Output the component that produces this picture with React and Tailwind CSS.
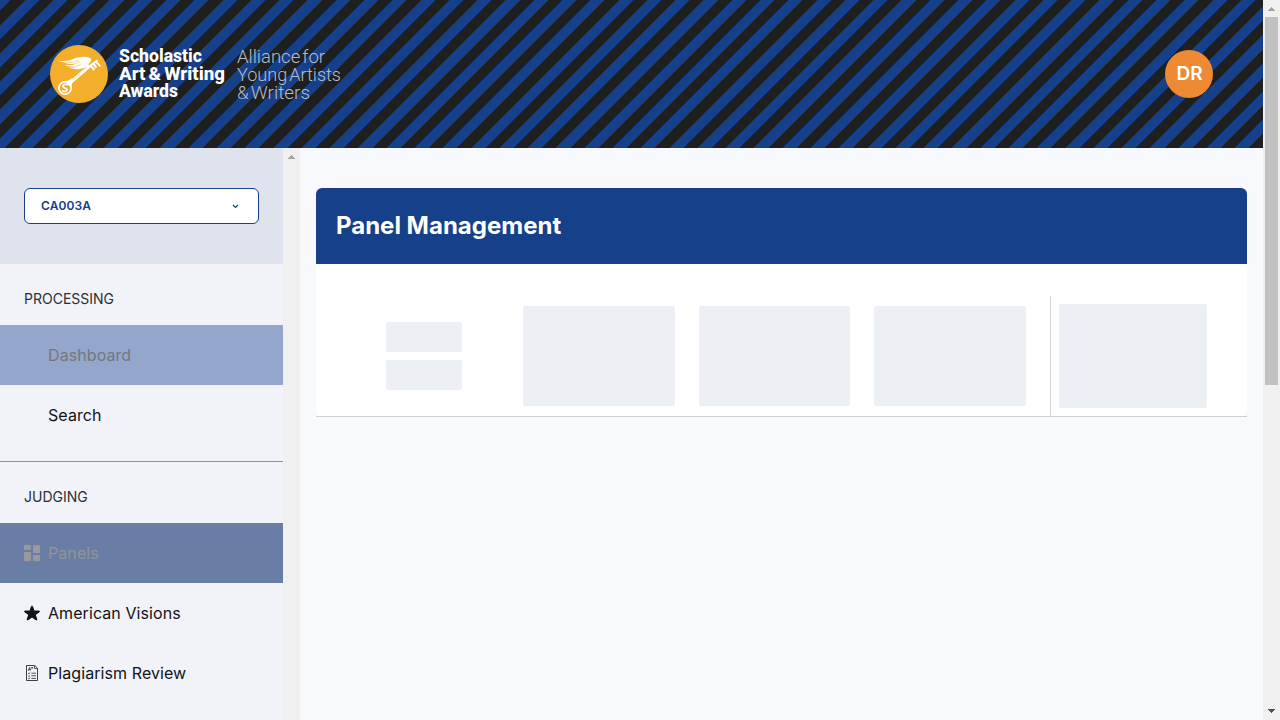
import { IoStar } from "react-icons/io5";

function Logo() {
  return (
    <svg width="300" height="62" viewBox="0 0 300 62" className="block shrink-0">
      <circle cx="29" cy="31" r="29" fill="#f3ae2c" />
      <svg x="0" y="2" width="58" height="58" viewBox="30 30 174 174">
        <path
          d="M51 77c22 2 36 1 46-4 14-7 38-10 52-5 7 3 6 11-1 15l-6 12-18 6c-14 4-33 0-38-4 8 1 18 0 23-2-14 2-28-1-36-6 12 1 24 1 31-2-17 1-28-1-34-5z"
          fill="#fff"
        />
        <g stroke="#f3ae2c" strokeWidth="1.6" fill="none">
          <path d="M58 81c24 4 44 2 60-6" />
          <path d="M68 88c20 3 38 0 52-8" />
          <path d="M78 95c18 3 34 0 46-9" />
        </g>
        <path d="M90 137l56-48 7 7-56 48z" fill="#fff" />
        <path d="M94 139l50-44" stroke="#f3ae2c" strokeWidth="1" fill="none" />
        <path d="M142 98L173 76M152 92l11 13M160 86l9 12M167 79l14 15" stroke="#fff" strokeWidth="6" fill="none" />
        <circle cx="75" cy="159" r="18.5" fill="none" stroke="#fff" strokeWidth="5" />
        <path d="M74 139c12-1 16-5 22-9l6 6c-5 6-8 12-8 22z" fill="#fff" />
        <path d="M83 150c-8-5-16 0-14 5 2 4 12 4 12 9 0 5-8 8-15 3" stroke="#fff" strokeWidth="5" fill="none" />
      </svg>
      <g fill="#fff" fontFamily="Roboto, sans-serif" fontWeight="800" fontSize="18.4" wordSpacing="-1.5">
        <text x="69" y="19" textLength="83" lengthAdjust="spacingAndGlyphs">Scholastic</text>
        <text x="69" y="36.8" textLength="106" lengthAdjust="spacingAndGlyphs">Art &amp; Writing</text>
        <text x="69" y="54.4" textLength="59" lengthAdjust="spacingAndGlyphs">Awards</text>
      </g>
      <g fill="#b9bcc4" fontFamily="Roboto, sans-serif" fontWeight="300" fontSize="19" wordSpacing="-2.5">
        <text x="187" y="19.5" textLength="88" lengthAdjust="spacingAndGlyphs">Alliance for</text>
        <text x="187" y="37.7" textLength="104" lengthAdjust="spacingAndGlyphs">Young Artists</text>
        <text x="187" y="55.5" textLength="73" lengthAdjust="spacingAndGlyphs">&amp; Writers</text>
      </g>
    </svg>
  );
}

function PanelsIcon() {
  return (
    <svg width="16" height="16" viewBox="0 0 16 16" fill="#999999">
      <rect x="0" y="0" width="7" height="5" rx=".4" />
      <rect x="0" y="7" width="7" height="9" rx=".4" />
      <rect x="9" y="0" width="7" height="8" rx=".4" />
      <rect x="9" y="10" width="7" height="6" rx=".4" />
    </svg>
  );
}

function ReviewIcon() {
  return (
    <svg width="16" height="16" viewBox="0 0 16 16" fill="none" stroke="#111216">
      <path d="M2.5.5h8.3l2.7 2.7v12.3h-11z" strokeWidth=".8" />
      <path d="M10.5.8v2.7h2.8" strokeWidth=".7" />
      <path d="M4.2 5.8l1.4-3.4 1.2 3.2M4.6 4.7h1.9M7.2 2.8h1.8M8.1 2v1.6" strokeWidth=".7" />
      <path d="M4 8l.8.8L6.2 7.5M4 10.8l.8.8 1.4-1.3M4 13.3l.8.6 1.4-1.2" strokeWidth=".7" />
      <path d="M7.3 8.2H12M7.3 10.7H12M7.3 13.4H12" strokeWidth=".7" />
    </svg>
  );
}

function NavItem({ icon, label, className = "" }) {
  return (
    <a className={`flex h-[60px] items-center pl-6 text-base tracking-[0.08px] ${className}`}>
      <span className="flex w-6 items-center">{icon}</span>
      {label}
    </a>
  );
}

function Arrow({ down = false, color = "#a3a3a3" }) {
  return (
    <svg width="7" height="4" viewBox="0 0 7 4" fill={color} shapeRendering="crispEdges">
      {down ? <path d="M0 0h7v1H6v1H5v1H4v1H3V3H2V2H1V1H0z" /> : <path d="M3 0h1v1h1v1h1v1h1v1H0V3h1V2h1V1h1z" />}
    </svg>
  );
}

function Block({ className }) {
  return <div className={`rounded-[2px] bg-[#ecf0f5] ${className}`} />;
}

export default function App() {
  return (
    <div className="flex h-[720px] w-[1280px] overflow-hidden bg-[#f8f9fd] font-['Inter',sans-serif] text-[#111216]">
      <div className="flex w-[1263px] flex-col">
        <header className="flex h-[148px] shrink-0 items-center justify-between bg-[repeating-linear-gradient(-45deg,#1d1f20_0px,#1d1f20_10px,#17408a_10px,#17408a_20px)] px-[50px]">
          <Logo />
          <div className="flex size-12 items-center justify-center rounded-full bg-[#ee8a36] pl-px text-[19px] font-semibold text-white">
            DR
          </div>
        </header>
        <div className="flex min-h-0 flex-1">
          <aside className="w-[283px] shrink-0 overflow-hidden bg-[#f1f3f8]">
            <div className="h-[116px] bg-[#dfe3ed] px-6 pt-10">
              <button className="flex h-9 w-[235px] items-center justify-between rounded-md border border-[#17408a] bg-white pr-[19px] pl-4 text-xs font-semibold tracking-[0.1px] text-[#17408a]">
                CA003A
                <svg width="7" height="5" viewBox="0 0 7 5" fill="none" stroke="#17408a" strokeWidth="1.2">
                  <path d="M1 1l2.5 2.5L6 1" />
                </svg>
              </button>
            </div>
            <div className="flex h-[61px] items-end px-6 pb-4 text-sm leading-5 text-[#2c2e33]">PROCESSING</div>
            <NavItem label="Dashboard" className="bg-[#94a6cb] text-[#74777d]" />
            <NavItem label="Search" />
            <div className="h-[17px] border-b border-[#8b93a9]" />
            <div className="flex h-[61px] items-end px-6 pb-4 text-sm leading-5 text-[#2c2e33]">JUDGING</div>
            <NavItem icon={<PanelsIcon />} label="Panels" className="bg-[#697da5] text-[#929497]" />
            <NavItem
              icon={<IoStar size={16} className="overflow-visible stroke-current stroke-[32px]" />}
              label="American Visions"
            />
            <NavItem icon={<ReviewIcon />} label="Plagiarism Review" />
          </aside>
          <div className="flex w-[17px] shrink-0 justify-center bg-[#f0f0f0] pt-[7px]">
            <Arrow />
          </div>
          <main className="flex-1 px-4 pt-10">
            <div className="border-b border-[#d0d1d4]">
              <section className="overflow-hidden rounded-md bg-white">
                <h1 className="flex h-[76px] items-center bg-[#17408a] pl-5 text-2xl font-bold text-white">
                  Panel Management
                </h1>
                <div className="flex h-[152px] pt-8">
                  <div className="flex w-[207px] flex-col gap-2 pt-[26px] pl-[70px]">
                    <Block className="h-[30px] w-[76px]" />
                    <Block className="h-[30px] w-[76px]" />
                  </div>
                  <div className="flex w-[527px] gap-6 pt-[10px] pr-6">
                    <Block className="h-[100px] flex-1" />
                    <Block className="h-[100px] flex-1" />
                    <Block className="h-[100px] flex-1" />
                  </div>
                  <div className="flex-1 border-l border-[#d0d1d4] pt-2 pl-2">
                    <Block className="h-[104px] w-[148px]" />
                  </div>
                </div>
              </section>
            </div>
          </main>
        </div>
      </div>
      <div className="flex w-[17px] shrink-0 flex-col items-center bg-[#f0f0f0] pt-[7px]">
        <Arrow />
        <div className="mt-[6px] h-[368px] w-[13px] bg-[#c1c1c1]" />
        <div className="mt-auto pb-[7px]">
          <Arrow down color="#505050" />
        </div>
      </div>
    </div>
  );
}
